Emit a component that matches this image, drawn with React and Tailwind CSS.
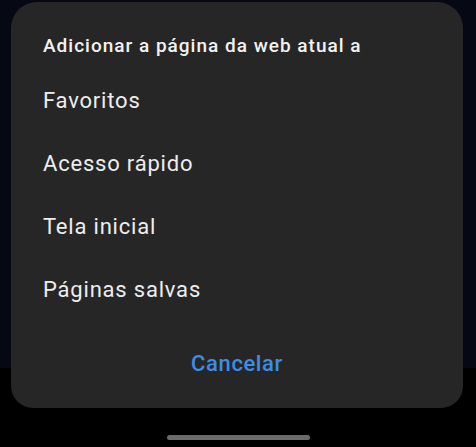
import React from "react";

const options = ["Favoritos", "Acesso rápido", "Tela inicial", "Páginas salvas"];

export default function App() {
  return (
    <div
      className="h-[447px] w-[476px] overflow-hidden bg-[linear-gradient(to_bottom,#060913_368px,#000_368px)] pt-[2px]"
      style={{ fontFamily: "Roboto, 'Noto Sans', sans-serif" }}
    >
      <div className="ml-[11px] mr-[13px] h-[406px] rounded-t-[26px] rounded-b-[22px] bg-[#262626] pt-[32px]">
        <div className="h-[24px] px-[32px] text-[19px] font-medium leading-[24px] tracking-[1px] text-[#f2f2f2]">
          Adicionar a página da web atual a
        </div>
        <ul className="mt-[11px]">
          {options.map((label) => (
            <li
              key={label}
              className="flex h-[63px] items-center px-[32px] text-[22px] leading-none tracking-[0.8px] text-[#ededed]"
            >
              {label}
            </li>
          ))}
        </ul>
        <button className="mt-[11px] flex h-[63px] w-full items-center justify-center text-[22px] font-medium leading-none tracking-[0.6px] text-[#3d8de8]">
          Cancelar
        </button>
      </div>
      <div className="mx-auto mt-[27px] h-[5px] w-[143px] rounded-full bg-[#6b6b6b]" />
    </div>
  );
}
